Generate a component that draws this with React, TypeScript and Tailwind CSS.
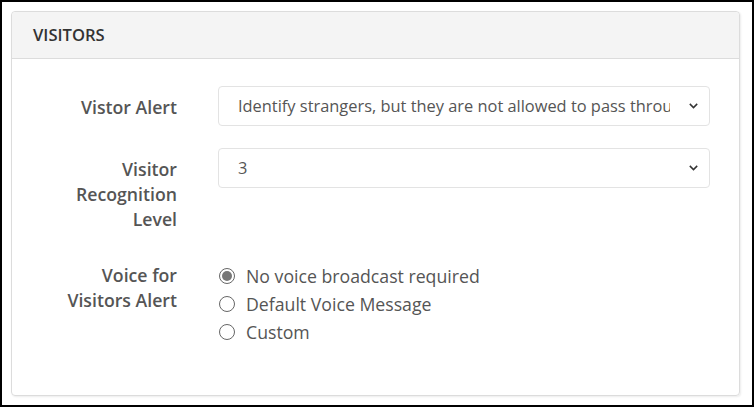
import React, { useState } from 'react';

const fieldFont = { fontFamily: '"Open Sans", "Noto Sans", sans-serif' };

const Chevron: React.FC = () => (
  <svg width="9" height="6" viewBox="0 0 9 6" className="shrink-0">
    <path d="M0.8 0.9l3.7 3.7L8.2 0.9" fill="none" stroke="#333" strokeWidth="1.5" />
  </svg>
);

const FakeSelect: React.FC<{ value: string }> = ({ value }) => (
  <div className="flex h-[40px] w-[492px] items-center rounded-[4px] border border-[#e3e3e3] bg-white pl-[19px] pr-[11px]">
    <span className="mr-[19px] min-w-0 flex-1 overflow-hidden whitespace-nowrap text-[16.4px] text-[#555]">{value}</span>
    <Chevron />
  </div>
);

const Radio: React.FC<{ checked: boolean; label: string; onClick: () => void }> = ({ checked, label, onClick }) => (
  <div className="flex h-[28px] cursor-pointer items-center" onClick={onClick}>
    <span className="ml-[1px] flex h-[16px] w-[16px] items-center justify-center rounded-full border border-[#666] bg-white">
      {checked && <span className="h-[10px] w-[10px] rounded-full bg-[#777]" />}
    </span>
    <span className="ml-[11px] text-[17.7px] text-[#555]">{label}</span>
  </div>
);

export default function App() {
  const [voice, setVoice] = useState(0);
  const voices = ['No voice broadcast required', 'Default Voice Message', 'Custom'];

  return (
    <div className="h-[407px] w-[754px] border-2 border-black bg-white p-[9px]" style={fieldFont}>
      <div className="h-[385px] w-[729px] rounded-[4px] border border-[#dcdcdc] shadow-[1px_1px_2px_rgba(0,0,0,0.08)]">
        {/* Header */}
        <div className="flex h-[47px] items-center rounded-t-[4px] border-b border-[#dcdcdc] bg-[#f4f4f4] pl-[21px]">
          <span className="text-[16.6px] font-semibold text-[#333]">VISITORS</span>
        </div>

        {/* Body */}
        <div className="flex flex-col gap-[22px] pt-[27px]">
          <div className="flex">
            <div className="w-[165px] pt-[9px] text-right text-[17.7px] leading-[25px] font-semibold text-[#555]">Vistor Alert</div>
            <div className="ml-[41px]">
              <FakeSelect value="Identify strangers, but they are not allowed to pass through" />
            </div>
          </div>

          <div className="flex">
            <div className="w-[165px] pt-[9px] text-right text-[17.7px] leading-[25px] font-semibold text-[#555]">
              Visitor
              <br />
              Recognition
              <br />
              Level
            </div>
            <div className="ml-[41px]">
              <FakeSelect value="3" />
            </div>
          </div>

          <div className="flex">
            <div className="w-[165px] pt-[9px] text-right text-[17.7px] leading-[25px] font-semibold text-[#555]">
              Voice for
              <br />
              Visitors Alert
            </div>
            <div className="ml-[41px] flex flex-col pt-[8px]">
              {voices.map((v, i) => (
                <Radio key={v} label={v} checked={voice === i} onClick={() => setVoice(i)} />
              ))}
            </div>
          </div>
        </div>
      </div>
    </div>
  );
}
